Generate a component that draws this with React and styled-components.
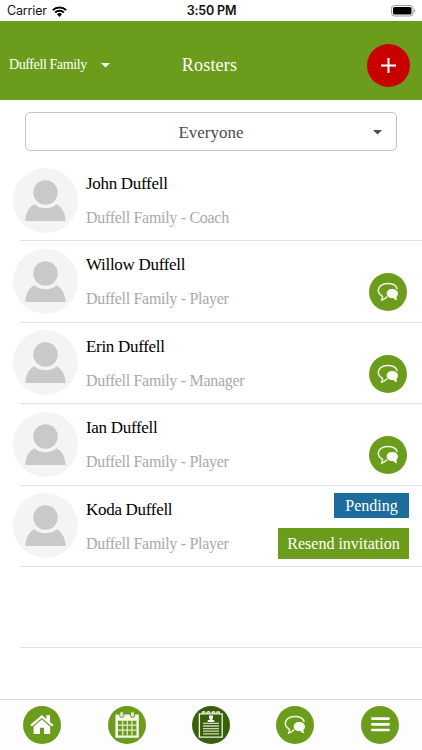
import React from 'react'
import styled, { createGlobalStyle } from 'styled-components'

const GlobalStyle = createGlobalStyle`
  * { box-sizing: border-box; }
  body {
    margin: 0;
    background: #ffffff;
    font-family: 'Liberation Serif', serif;
  }`

const Screen = styled.div`
  width: 422px;
  height: 750px;
  display: flex;
  flex-direction: column;
  overflow: hidden;
  background: #ffffff;`

const StatusBar = styled.div`
  height: 21px;
  flex: none;
  display: grid;
  grid-template-columns: 1fr auto 1fr;
  align-items: center;
  padding: 1px 6px 0 7px;
  color: #111111;
  font-family: Inter, sans-serif;
  font-size: 12.5px;
  line-height: 20px;`

const Carrier = styled.div`
  display: flex;
  align-items: center;
  gap: 5px;
  letter-spacing: -0.15px;`

const Clock = styled.div`
  font-weight: 600;
  letter-spacing: -0.15px;`

const Battery = styled.div`
  display: flex;
  justify-content: flex-end;`

const Header = styled.header`
  height: 79px;
  flex: none;
  display: grid;
  grid-template-columns: 1fr auto 1fr;
  align-items: center;
  padding: 9px 12px 0 9px;
  background: #6c9c1c;
  color: #ffffff;`

const TeamSelect = styled.div`
  display: flex;
  align-items: center;
  gap: 14px;
  font-size: 14px;
  letter-spacing: -0.4px;
  line-height: 20px;`

const Title = styled.div`
  font-size: 18px;
  letter-spacing: 0.2px;
  line-height: 24px;`

const AddButton = styled.div`
  width: 43px;
  height: 43px;
  justify-self: end;
  display: flex;
  align-items: center;
  justify-content: center;
  border-radius: 50%;
  background: #c80000;`

const Filter = styled.div`
  height: 39px;
  flex: none;
  margin: 12px 25px 9px;
  display: grid;
  grid-template-columns: 1fr auto 1fr;
  align-items: center;
  padding: 2px 14px 0;
  border: 1px solid #c4c4c4;
  border-radius: 5px;
  color: #4c4c4c;
  font-size: 17px;
  svg { justify-self: end; }`

const List = styled.div`
  flex: 1;`

const Row = styled.div`
  height: 81.4px;
  display: flex;
  margin-left: 20px;
  padding-right: 13px;
  border-bottom: 1px solid #e2e2e2;`

const Avatar = styled.svg`
  width: 65px;
  height: 65px;
  flex: none;
  margin: 7.500px 8.500px 0 -7.500px;`

const Person = styled.div`
  flex: 1;
  white-space: nowrap;
  padding-top: 13px;`

const Name = styled.div`
  color: #000000;
  font-size: 17px;
  letter-spacing: -0.3px;
  line-height: 22px;`

const Role = styled.div`
  margin-top: 12px;
  color: #a9a9a9;
  font-size: 16px;
  letter-spacing: -0.3px;
  line-height: 22px;`

const Actions = styled.div`
  display: flex;
  flex-direction: column;
  align-items: flex-end;
  padding-top: ${props => (props.$pending ? '7px' : '32px')};
  margin-right: ${props => (props.$pending ? '0' : '2px')};`

const Badge = styled.div`
  width: 75px;
  height: 25px;
  background: #1c6c9c;
  color: #ffffff;
  font-size: 16px;
  line-height: 26px;
  text-align: center;`

const Resend = styled.div`
  width: 131px;
  height: 31px;
  margin-top: 10px;
  background: #6c9c1c;
  color: #ffffff;
  font-size: 16px;
  line-height: 32px;
  text-align: center;`

const TabBar = styled.nav`
  height: 51px;
  flex: none;
  display: flex;
  justify-content: space-around;
  padding-top: 6px;
  border-top: 1px solid #d8d8d8;
  background: #fdfdfd;`

const Round = styled.svg`
  width: 38px;
  height: 38px;
  display: block;
  border-radius: 50%;
  background: ${props => (props.$active ? '#38600a' : '#6c9c1c')};`

const Caret = ({ color }) => (
  <svg width="9" height="5" viewBox="0 0 9 5">
    <path d="M0 0h9L4.500 4.500z" fill={color} />
  </svg>
)

const Chat = () => (
  <Round viewBox="0 0 38 38">
    <path
      d="M13.500 23.200C11 22 9.300 19.900 9.300 17.300c0-4 4-6.700 9.500-6.700 5 0 8.600 2.200 9.400 5.400M13.500 23.200c.2 1.600-.2 2.800-1 4.200 2.600-.8 4.300-2 5.800-3.800"
      fill="none" stroke="#eef4e0" strokeWidth="1.500" strokeLinejoin="round"
    />
    <path
      d="M23.100 15.900c3.500 0 5.900 1.900 5.900 4.500 0 1.400-.6 2.500-1.500 3.300 0 1.400.2 2.500.7 3.500-1.800-.3-3-1.100-4-2.300h-1.100c-3.200 0-5.400-1.800-5.400-4.500s2.200-4.500 5.400-4.500z"
      fill="#f8fbf1"
    />
  </Round>
)

const Home = () => (
  <Round viewBox="0 0 38 38">
    <path d="M7.300 18.800 18.800 9l4.600 3.900V9H27v6.900l3.600 3-1.700 1.700L18.800 12 9 20.500z" fill="#ffffff" />
    <path d="m18.800 13.600 8.400 7.100V28h-6.100v-6.300h-4.200V28h-6.300v-7.200z" fill="#ffffff" />
  </Round>
)

const Calendar = () => (
  <Round viewBox="0 0 38 38">
    <path d="M7.400 8.600h23.400v23.200H7.400z" fill="#f5f9eb" />
    <path d="M10 14.800h18.400v14.700H10z" fill="#6c9c1c" />
    <path d="M10 19.200h18.400M10 24.200h18.400M14.700 14.800v14.700M19.300 14.800v14.700M23.900 14.800v14.700" stroke="#e2ecce" strokeWidth="1.200" />
    <rect x="11.700" y="5.500" width="4" height="6" rx="2" fill="#dce8c6" stroke="#6c9c1c" />
    <rect x="22.500" y="5.500" width="4" height="6" rx="2" fill="#dce8c6" stroke="#6c9c1c" />
  </Round>
)

const Clipboard = () => (
  <Round $active viewBox="0 0 38 38">
    <path d="M7.400 7.800h22.800v23.400H7.400z" fill="none" stroke="#edf2e5" strokeWidth="1.300" />
    <path d="M10.200 7.500c.3-2.300 2.700-2.300 3 0M15 7.500c.3-2.300 2.700-2.300 3 0M20 7.500c.3-2.300 2.700-2.300 3 0M24.600 7.500c.3-2.300 2.700-2.300 3 0" fill="none" stroke="#edf2e5" strokeWidth="1.500" />
    <path d="M17 9.400h4v3h-.7v1.500h2v2H15.700v-2h2v-1.500H17z" fill="#ffffff" />
    <path d="M11 17.400h16M11 20h16M11 22.600h16M11 25.200h16M11 27.800h16" stroke="#cbd7b8" strokeWidth="1.300" />
  </Round>
)

const Menu = () => (
  <Round viewBox="0 0 38 38">
    <path d="M11.300 12.700h16.300M11.300 18.300h16.300M11.300 24h16.300" stroke="#ffffff" strokeWidth="2.700" strokeLinecap="round" />
  </Round>
)

const people = [
  { name: 'John Duffell', role: 'Coach' },
  { name: 'Willow Duffell', role: 'Player', chat: true },
  { name: 'Erin Duffell', role: 'Manager', chat: true },
  { name: 'Ian Duffell', role: 'Player', chat: true },
  { name: 'Koda Duffell', role: 'Player', pending: true }
]

const PersonRow = ({ person }) => (
  <Row>
    <Avatar viewBox="0 0 65 65">
      <circle cx="32.500" cy="32.500" r="32.500" fill="#f4f4f4" />
      <circle cx="32.500" cy="24.500" r="12.200" fill="#c9c9c9" />
      <path d="M12.300 53c.4-7.800 3.300-13.900 9-16.700 3 2.600 7 4 11.200 4s8.200-1.400 11.200-4c5.500 2.800 8.500 8.900 9 16.700z" fill="#c9c9c9" />
    </Avatar>
    <Person>
      <Name>{person.name}</Name>
      <Role>Duffell Family - {person.role}</Role>
    </Person>
    <Actions $pending={person.pending}>
      {person.chat && <Chat />}
      {person.pending && <Badge>Pending</Badge>}
      {person.pending && <Resend>Resend invitation</Resend>}
    </Actions>
  </Row>
)

export default function App() {
  return (
    <Screen>
      <GlobalStyle />

      <StatusBar>
        <Carrier>
          Carrier
          <svg width="15" height="11" viewBox="0 0 15 11">
            <path d="M.8 4.100a9.600 9.600 0 0 1 13.400 0M3.200 6.500a6.200 6.200 0 0 1 8.600 0" fill="none" stroke="#000000" strokeWidth="2" />
            <path d="M5 8.300a3.600 3.600 0 0 1 5 0L7.500 10.900z" fill="#000000" />
          </svg>
        </Carrier>
        <Clock>3:50 PM</Clock>
        <Battery>
          <svg width="25" height="12" viewBox="0 0 25 12">
            <rect x=".5" y=".5" width="21.500" height="10.500" rx="3" fill="#ffffff" stroke="#9a9a9a" />
            <rect x="2" y="2" width="18.500" height="7.500" rx="1.600" fill="#000000" />
            <path d="M23.200 4v3.700c1.500-.6 1.500-3.100 0-3.700z" fill="#9a9a9a" />
          </svg>
        </Battery>
      </StatusBar>

      <Header>
        <TeamSelect>
          Duffell Family
          <Caret color="#ffffff" />
        </TeamSelect>
        <Title>Rosters</Title>
        <AddButton>
          <svg width="15" height="15" viewBox="0 0 15 15">
            <path d="M7.500 0v15M0 7.500h15" stroke="#ffffff" strokeWidth="2" />
          </svg>
        </AddButton>
      </Header>

      <Filter>
        <span />
        Everyone
        <Caret color="#4c4c4c" />
      </Filter>

      <List>
        {people.map(person => <PersonRow key={person.name} person={person} />)}
        <Row />
      </List>

      <TabBar>
        <Home />
        <Calendar />
        <Clipboard />
        <Chat />
        <Menu />
      </TabBar>
    </Screen>
  )
}
